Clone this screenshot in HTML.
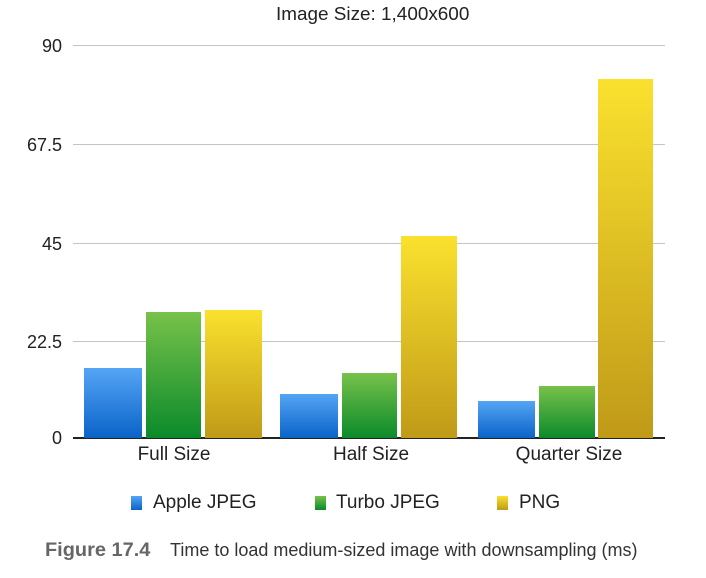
<!DOCTYPE html>
<html><head><style>
body{margin:0;width:706px;height:578px;background:#fff;position:relative;font-family:"Liberation Sans",sans-serif;overflow:hidden}
.a{position:absolute;white-space:nowrap}
.g{position:absolute;left:73px;width:592px;height:1px;background:#c4c4c4}
.yl{position:absolute;right:644px;font-size:18px;color:#222;line-height:20px}
.b{position:absolute}
.bl{background:linear-gradient(#55a5f5,#0a63c8)}
.gr{background:linear-gradient(#77c24a,#0b8a2a)}
.ye{background:linear-gradient(#fae12e,#c09a18)}
.xl{position:absolute;top:444px;font-size:19px;color:#222;transform:translateX(-50%);white-space:nowrap}
.lg{position:absolute;top:492px;font-size:19px;color:#222}
.sq{position:absolute;top:496px;width:11px;height:14px}
</style></head><body>
<div class="a" style="left:276px;top:4px;font-size:18px;color:#222;transform:scaleX(1.05);transform-origin:left">Image Size: 1,400x600</div>
<div class="g" style="top:45px"></div>
<div class="g" style="top:144px"></div>
<div class="g" style="top:243px"></div>
<div class="g" style="top:341px"></div>
<div class="a" style="left:73px;top:437px;width:592px;height:2px;background:#222"></div>
<div class="yl" style="top:36px">90</div>
<div class="yl" style="top:135px">67.5</div>
<div class="yl" style="top:234px">45</div>
<div class="yl" style="top:332px">22.5</div>
<div class="yl" style="top:428px">0</div>
<div class="b bl" style="left:84px;width:58px;top:368px;height:70px"></div>
<div class="b gr" style="left:146px;width:55px;top:312px;height:126px"></div>
<div class="b ye" style="left:205px;width:57px;top:310px;height:128px"></div>
<div class="b bl" style="left:280px;width:58px;top:394px;height:44px"></div>
<div class="b gr" style="left:342px;width:55px;top:373px;height:65px"></div>
<div class="b ye" style="left:401px;width:56px;top:236px;height:202px"></div>
<div class="b bl" style="left:478px;width:57px;top:401px;height:37px"></div>
<div class="b gr" style="left:539px;width:56px;top:386px;height:52px"></div>
<div class="b ye" style="left:598px;width:55px;top:79px;height:359px"></div>
<div class="xl" style="left:174px">Full Size</div>
<div class="xl" style="left:371px">Half Size</div>
<div class="xl" style="left:569px">Quarter Size</div>
<div class="sq bl" style="left:131px"></div><div class="lg" style="left:153px">Apple JPEG</div>
<div class="sq gr" style="left:315px"></div><div class="lg" style="left:336px">Turbo JPEG</div>
<div class="sq ye" style="left:497px"></div><div class="lg" style="left:519px">PNG</div>
<div class="a" style="left:45px;top:540px;font-size:19px;font-weight:bold;color:#666;transform:scaleX(1.05);transform-origin:left">Figure 17.4</div>
<div class="a" style="left:170px;top:540px;font-size:18px;color:#333;transform:scaleX(1.0);transform-origin:left">Time to load medium-sized image with downsampling (ms)</div>
</body></html>
